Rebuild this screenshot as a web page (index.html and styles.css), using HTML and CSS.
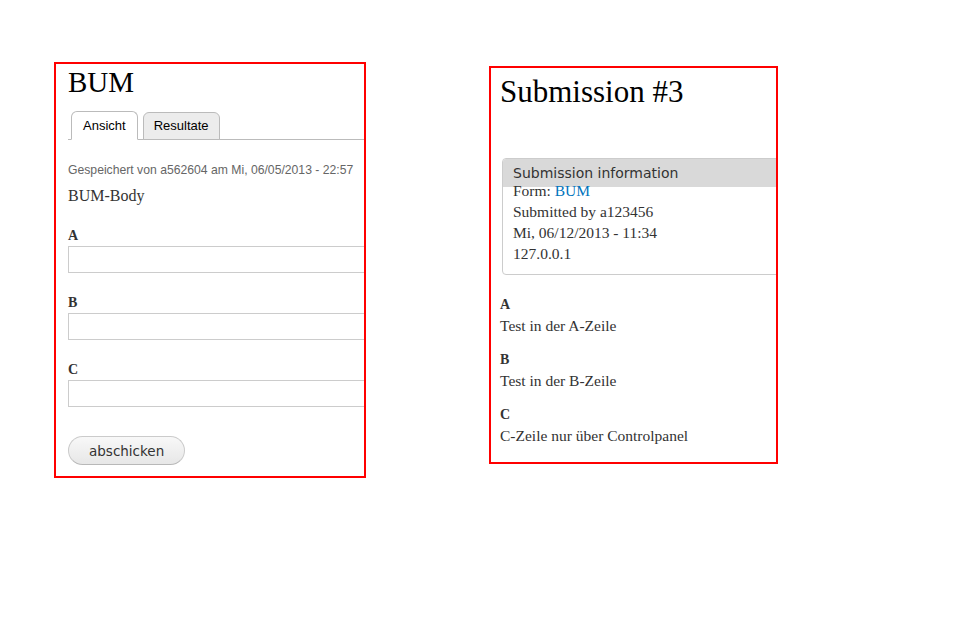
FILE: index.html
```html
<!DOCTYPE html>
<html lang="de">
<head>
<meta charset="utf-8">
<title>BUM</title>
<link rel="stylesheet" href="styles.css">
</head>
<body>
<div class="page">
  <div class="panel panel-form">
    <h1 class="title title-left">BUM</h1>
    <div class="tabs">
      <span class="tab tab-active">Ansicht</span>
      <span class="tab tab-inactive">Resultate</span>
    </div>
    <div class="meta">Gespeichert von a562604 am Mi, 06/05/2013 - 22:57</div>
    <div class="body-text">BUM-Body</div>
    <form class="form">
      <label class="field-label field-label-first">A</label>
      <input class="field-input" type="text">
      <label class="field-label">B</label>
      <input class="field-input" type="text">
      <label class="field-label">C</label>
      <input class="field-input" type="text">
      <button class="submit" type="button">abschicken</button>
    </form>
  </div>

  <div class="panel panel-sub">
    <h1 class="title title-right">Submission #3</h1>
    <div class="fieldset">
      <div class="legend">Submission information</div>
      <div class="fs-content">
        <div class="fs-line">Form: <a class="link" href="#">BUM</a></div>
        <div class="fs-line">Submitted by a123456</div>
        <div class="fs-line">Mi, 06/12/2013 - 11:34</div>
        <div class="fs-line">127.0.0.1</div>
      </div>
    </div>
    <div class="item item-first">
      <div class="item-label">A</div>
      <div class="item-value">Test in der A-Zeile</div>
    </div>
    <div class="item">
      <div class="item-label">B</div>
      <div class="item-value">Test in der B-Zeile</div>
    </div>
    <div class="item">
      <div class="item-label">C</div>
      <div class="item-value">C-Zeile nur über Controlpanel</div>
    </div>
  </div>
</div>
</body>
</html>
```

FILE: styles.css
```css
* { box-sizing: border-box; }

html, body {
  margin: 0;
  padding: 0;
  background: #fff;
}

body {
  font-family: "Liberation Serif", "Times New Roman", serif;
  color: #333;
}

.page {
  display: flex;
  align-items: flex-start;
  padding: 62px 0 0 54px;
}

.panel {
  border: 2px solid #ff0000;
  overflow: hidden;
}

/* ---------- left panel ---------- */
.panel-form {
  width: 312px;
  height: 416px;
  padding: 0 0 0 12px;
}

.title {
  font-family: "Liberation Serif", "Times New Roman", serif;
  font-weight: normal;
  color: #000;
  margin: 0;
  white-space: nowrap;
}

.title-left {
  font-size: 29px;
  line-height: 33px;
  margin-top: 2px;
}

.tabs {
  display: flex;
  gap: 5px;
  margin-top: 12px;
  padding-left: 3px;
  border-bottom: 1px solid #bbb;
  height: 29px;
  width: 400px;
}

.tab {
  font-family: "Liberation Sans", Arial, sans-serif;
  font-size: 13px;
  line-height: 16px;
  height: 29px;
  padding-top: 6px;
  border: 1px solid #bbb;
  border-radius: 6px 6px 0 0;
  color: #000;
  white-space: nowrap;
}

.tab-active {
  background: #fff;
  border-bottom-color: #fff;
  padding-left: 11px;
  padding-right: 11px;
}

.tab-inactive {
  background: #ececec;
  height: 28px;
  margin-top: 1px;
  padding-top: 5px;
  padding-left: 10px;
  padding-right: 10px;
}

.meta {
  font-family: "Liberation Sans", Arial, sans-serif;
  font-size: 12.2px;
  line-height: 18px;
  color: #666;
  margin-top: 21px;
  white-space: nowrap;
}

.body-text {
  font-size: 16px;
  line-height: 21px;
  margin-top: 6px;
}

.form {
  display: flex;
  flex-direction: column;
  align-items: flex-start;
  margin-top: 19px;
}

.field-label {
  display: block;
  font-weight: bold;
  font-size: 14px;
  line-height: 18px;
  padding-top: 2px;
  color: #333;
  margin-top: 19px;
}

.field-label-first {
  margin-top: 0;
}

.field-input {
  display: block;
  width: 420px;
  height: 27px;
  margin: 1px 0 0;
  border: 1px solid #ccc;
  background: #fff;
  padding: 2px 4px;
  font-size: 13px;
}

.submit {
  margin-top: 29px;
  height: 29px;
  padding: 0 20px;
  border: 1px solid #cbcbcb;
  border-bottom-color: #b8b8b8;
  border-radius: 15px;
  background: linear-gradient(#f8f8f8, #e7e7e7);
  font-family: "DejaVu Sans", Verdana, sans-serif;
  font-size: 13.5px;
  color: #333;
  line-height: 16px;
  cursor: pointer;
}

/* ---------- right panel ---------- */
.panel-sub {
  width: 289px;
  height: 398px;
  margin-left: 123px;
  margin-top: 4px;
  padding: 6px 0 0 9px;
}

.title-right {
  font-size: 31px;
  line-height: 36px;
}

.fieldset {
  width: 320px;
  margin: 48px 0 0 2px;
  border: 1px solid #ccc;
  border-radius: 4px;
  padding-bottom: 10px;
}

.legend {
  background: #d9d9d9;
  height: 28px;
  line-height: 28px;
  padding-left: 10px;
  border-radius: 3px 0 0 0;
  font-family: "DejaVu Sans", Verdana, sans-serif;
  font-size: 14px;
  color: #333;
  white-space: nowrap;
}

.fs-content {
  margin-top: -7px;
  padding-left: 10px;
  position: relative;
}

.fs-line {
  font-size: 15.5px;
  line-height: 21px;
  color: #333;
  white-space: nowrap;
}

.link {
  color: #0074bd;
  text-decoration: none;
}

.item {
  margin-top: 14px;
}

.item-first {
  margin-top: 20px;
}

.item-label {
  font-weight: bold;
  font-size: 14px;
  line-height: 20px;
  color: #333;
}

.item-value {
  font-size: 15.5px;
  line-height: 21px;
  color: #333;
  white-space: nowrap;
}
```
